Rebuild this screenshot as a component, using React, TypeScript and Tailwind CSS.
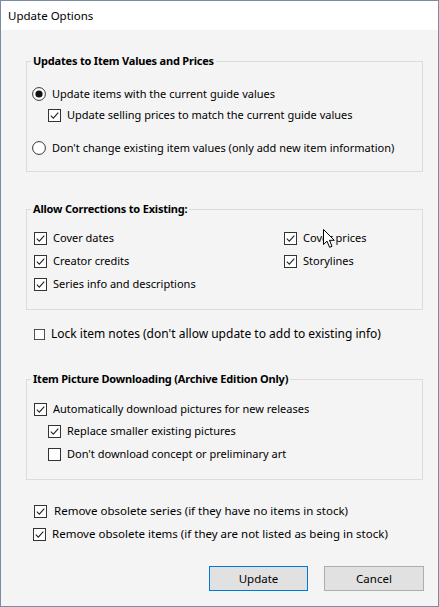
import React from 'react';

const font = { fontFamily: '"Noto Sans", "Open Sans", sans-serif' };

const Check: React.FC<{ checked?: boolean; size?: number }> = ({ checked, size = 13 }) => (
  <svg width={size} height={size} viewBox="0 0 13 13" className="shrink-0">
    <rect x="0.5" y="0.5" width="12" height="12" fill="#fff" stroke="#333" />
    {checked && <path d="M2.8 6.6 L5.3 9.1 L10.3 3.6" fill="none" stroke="#222" strokeWidth="1.1" />}
  </svg>
);

const Radio: React.FC<{ checked?: boolean }> = ({ checked }) => (
  <svg width="14" height="14" viewBox="0 0 14 14" className="shrink-0">
    <circle cx="7" cy="7" r="6.4" fill="#fff" stroke="#333" />
    {checked && <circle cx="7" cy="7" r="3.6" fill="#111" />}
  </svg>
);

const Row: React.FC<{ children: React.ReactNode; className?: string }> = ({ children, className = '' }) => (
  <div className={`flex items-center gap-[6px] whitespace-nowrap ${className}`}>{children}</div>
);

const Group: React.FC<{ title: string; className?: string; children: React.ReactNode }> = ({ title, className = '', children }) => (
  <fieldset className={`ml-[25px] w-[397px] border border-[#dcdcdc] pl-[7px] ${className}`}>
    <legend className="ml-[-3px] px-[2px] text-[11px] font-bold leading-[16px] tracking-[-0.2px] text-black">{title}</legend>
    {children}
  </fieldset>
);

export default function App() {
  return (
    <div style={font} className="relative flex h-[607px] w-[439px] flex-col border border-[#7b8ba1] bg-[#f4f4f4] text-[11px] text-black">
      {/* title bar */}
      <div className="flex h-[29px] items-center bg-white pl-[7px] text-[11.5px]">Update Options</div>

      <div className="flex flex-col">
        <Group title="Updates to Item Values and Prices" className="mt-[23px] pt-[15px] pb-[13px]">
          <Row className="ml-[-2px] h-[20px]">
            <Radio checked />
            <span>Update items with the current guide values</span>
          </Row>
          <Row className="mt-[1px] h-[20px] pl-[14px]">
            <Check checked />
            <span>Update selling prices to match the current guide values</span>
          </Row>
          <Row className="ml-[-2px] mt-[13px] h-[20px]">
            <Radio />
            <span>Don't change existing item values (only add new item information)</span>
          </Row>
        </Group>

        <Group title="Allow Corrections to Existing:" className="mt-[29px] pt-[10px] pb-[13px]">
          <div className="grid grid-cols-[250px_1fr]">
            <Row className="h-[23px]"><Check checked /><span>Cover dates</span></Row>
            <Row className="h-[23px]"><Check checked /><span>Cover prices</span></Row>
            <Row className="h-[23px]"><Check checked /><span>Creator credits</span></Row>
            <Row className="h-[23px]"><Check checked /><span>Storylines</span></Row>
            <Row className="h-[23px]"><Check checked /><span>Series info and descriptions</span></Row>
          </div>
        </Group>

        <Row className="ml-[33px] mt-[14px] h-[20px] text-[12px]">
          <Check size={11} />
          <span>Lock item notes (don't allow update to add to existing info)</span>
        </Row>

        <Group title="Item Picture Downloading (Archive Edition Only)" className="mt-[27px] pt-[11px] pb-[14px]">
          <Row className="h-[22px]"><Check checked /><span>Automatically download pictures for new releases</span></Row>
          <Row className="h-[22px] pl-[14px]"><Check checked /><span>Replace smaller existing pictures</span></Row>
          <Row className="mt-[1px] h-[22px] pl-[14px]"><Check /><span>Don't download concept or preliminary art</span></Row>
        </Group>

        <Row className="ml-[33px] mt-[20px] h-[22px] text-[11.5px] gap-[7px]">
          <Check checked />
          <span>Remove obsolete series (if they have no items in stock)</span>
        </Row>
        <Row className="ml-[32px] mt-[1px] h-[22px] text-[11.5px]">
          <Check checked />
          <span>Remove obsolete items (if they are not listed as being in stock)</span>
        </Row>

        <div className="mt-[21px] flex justify-end gap-[16px] pr-[14px]">
          <button className="h-[25px] w-[99px] border border-[#0078d7] bg-[#e1e1e1] text-[11.5px] text-black">Update</button>
          <button className="h-[25px] w-[100px] border border-[#adadad] bg-[#e1e1e1] text-[11.5px] text-black">Cancel</button>
        </div>
      </div>

      {/* mouse pointer */}
      <svg width="13" height="20" viewBox="0 0 13 20" className="absolute left-[322px] top-[228px]">
        <path d="M0.5 0.5 L0.5 15.5 L4 12.2 L6.6 18.3 L9 17.3 L6.5 11.3 L11.3 11.3 Z" fill="#fff" stroke="#000" strokeWidth="1" strokeLinejoin="round" />
      </svg>
    </div>
  );
}
